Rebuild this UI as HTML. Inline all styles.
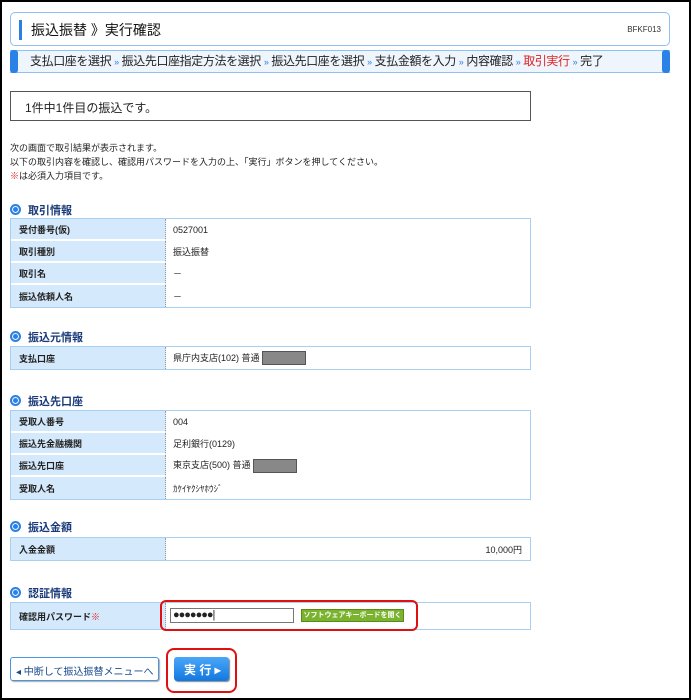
<!DOCTYPE html>
<html><head><meta charset="utf-8"><style>
*{margin:0;padding:0;box-sizing:border-box}
body{width:691px;height:700px;position:relative;background:#fff;font-family:"Liberation Sans","Noto Sans CJK JP",sans-serif;color:#222;overflow:hidden}
.frame{position:absolute;left:0;top:0;width:691px;height:700px;border:2px solid #000}
.a{position:absolute}
.title{left:10px;top:12px;width:660px;height:34px;border:1px solid #8fc0ee;border-radius:5px;background:#fff}
.title .bar{position:absolute;left:8px;top:7px;width:3px;height:20px;background:#2a7fe0}
.title .t{position:absolute;left:20px;top:7px;font-size:14px;color:#111}
.title .c{position:absolute;right:8px;top:12px;font-size:8px;color:#333}
.steps{left:10px;top:50px;width:660px;height:23px;background:#eef5fc;border-top:1px solid #8fc0ee;border-bottom:1px solid #8fc0ee}
.steps .e{position:absolute;top:-1px;width:8px;height:23px;background:#2a82e6;border-radius:3px}
.steps .t{position:absolute;left:20px;top:2px;font-size:12px;line-height:16px;color:#222;white-space:nowrap;letter-spacing:-0.4px}
.steps .t i{font-style:normal;color:#2a82e6;font-size:9px}
.steps .t b{font-weight:normal;color:#e02020}
.notice{left:10px;top:91px;width:521px;height:30px;border:1px solid #555;font-size:12px;padding:7px 0 0 14px}
.msg{left:10px;top:141px;font-size:9px;line-height:14px}
.h{position:absolute;left:10px;font-size:11px;font-weight:bold;color:#1a3a7a}
.h:before{content:"";display:inline-block;width:7px;height:7px;border:2px solid #2a82e6;border-radius:50%;margin-right:7px;vertical-align:-1px;box-shadow:inset 0 0 0 1px #fff;background:#2a82e6}
table{position:absolute;left:10px;width:521px;border-collapse:separate;border-spacing:0;border:1px solid #a8d0f0;font-size:9px}
td{height:22px;border-bottom:1px solid #fff}
tr:last-child td{border-bottom:none}
td.l{width:155px;background:#d4e9fb;font-weight:bold;padding-left:8px;border-right:1px dotted #999;border-bottom:2px solid #fff}
tr:last-child td.l{border-bottom:none}
td.v{padding-left:7px;background:#fff}
.gray{display:inline-block;width:44px;height:14px;background:#888;vertical-align:middle;border:1px solid #555}
.red{color:#e02020}
</style></head><body>
<div class="a title"><div class="bar"></div><div class="t">振込振替 》実行確認</div><div class="c">BFKF013</div></div>
<div class="a steps"><div class="e" style="left:0"></div><div class="e" style="right:0"></div>
<div class="t">支払口座を選択 <i>»</i> 振込先口座指定方法を選択 <i>»</i> 振込先口座を選択 <i>»</i> 支払金額を入力 <i>»</i> 内容確認 <i>»</i> <b>取引実行</b> <i>»</i> 完了</div></div>
<div class="a notice">1件中1件目の振込です。</div>
<div class="a msg">次の画面で取引結果が表示されます。<br>以下の取引内容を確認し、確認用パスワードを入力の上、「実行」ボタンを押してください。<br><span class="red">※</span>は必須入力項目です。</div>

<div class="h" style="top:202px">取引情報</div>
<table style="top:218px"><tr><td class="l">受付番号(仮)</td><td class="v">0527001</td></tr><tr><td class="l">取引種別</td><td class="v">振込振替</td></tr><tr><td class="l">取引名</td><td class="v">－</td></tr><tr><td class="l">振込依頼人名</td><td class="v">－</td></tr></table>

<div class="h" style="top:329px">振込元情報</div>
<table style="top:346px"><tr><td class="l">支払口座</td><td class="v">県庁内支店(102) 普通 <span class="gray"></span></td></tr></table>

<div class="h" style="top:393px">振込先口座</div>
<table style="top:410px"><tr><td class="l">受取人番号</td><td class="v">004</td></tr><tr><td class="l">振込先金融機関</td><td class="v">足利銀行(0129)</td></tr><tr><td class="l">振込先口座</td><td class="v">東京支店(500) 普通 <span class="gray"></span></td></tr><tr><td class="l">受取人名</td><td class="v">ｶｹｲﾔｸｼﾔﾎｳｼﾞ</td></tr></table>

<div class="h" style="top:519px">振込金額</div>
<table style="top:537px"><tr><td class="l">入金金額</td><td class="v" style="text-align:right;padding-right:8px">10,000円</td></tr></table>

<div class="h" style="top:585px">認証情報</div>
<table style="top:602px"><tr><td class="l" style="height:26px">確認用パスワード<span class="red">※</span></td><td class="v"></td></tr></table>
<div class="a" style="left:170px;top:608px;width:124px;height:15px;border:1px solid #777;background:#fff;font-size:11px;line-height:12px;padding-left:2px;letter-spacing:-1px">●●●●●●●|</div>
<div class="a" style="left:301px;top:609px;width:103px;height:13px;background:#7ab32e;border:1px solid #5a8a1a;color:#fff;font-size:7px;font-weight:bold;text-align:center;line-height:11px">ソフトウェアキーボードを開く</div>
<div class="a" style="left:160px;top:600px;width:258px;height:31px;border:2px solid #e01010;border-radius:6px"></div>

<div class="a" style="left:10px;top:657px;width:149px;height:24px;border:1px solid #4a94e0;border-radius:3px;background:#fff;font-size:10px;color:#1a4a8a;padding:5px 0 0 5px;box-shadow:1px 1px 1px #aaa;white-space:nowrap;overflow:hidden">◂ 中断して振込振替メニューへ</div>
<div class="a" style="left:174px;top:657px;width:55px;height:24px;border-radius:3px;background:linear-gradient(#4aa6f8,#1278e0);color:#fff;font-size:12px;font-weight:bold;padding:4px 0 0 10px;box-shadow:1px 1px 1px #888;white-space:nowrap">実 行 ▸</div>
<div class="a" style="left:166px;top:648px;width:71px;height:45px;border:2px solid #e01010;border-radius:8px"></div>
<div class="frame"></div>
</body></html>
